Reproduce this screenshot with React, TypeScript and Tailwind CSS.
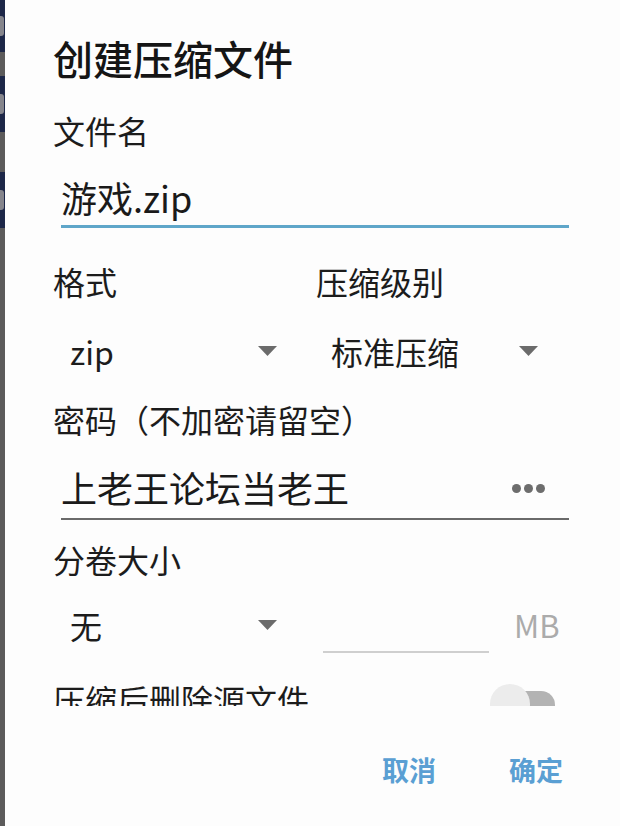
import React from 'react';

const FONT = { fontFamily: '"Noto Sans CJK SC", "Noto Sans", sans-serif' };

// little caret used by the dropdown fields
function Caret() {
  return (
    <svg width="19" height="10" viewBox="0 0 19 10" className="shrink-0">
      <polygon points="0,0 19,0 9.5,10" fill="#6b6b6b" />
    </svg>
  );
}

function Spinner({ value }: { value: string }) {
  return (
    <div className="flex items-center h-[52px] pl-[17px] pr-[37px] justify-between">
      <span className="text-[32px] leading-[52px] text-[#1c1c1c]">{value}</span>
      <Caret />
    </div>
  );
}

// strip of the window behind the dialog
function BehindStrip() {
  const blocks = [
    { h: 52, navy: true },
    { h: 24, navy: false },
    { h: 56, navy: true },
    { h: 40, navy: false },
    { h: 56, navy: true },
  ];
  return (
    <div className="w-[5px] shrink-0 bg-[#5c5b5b] flex flex-col">
      {blocks.map((b, i) =>
        b.navy ? (
          <div key={i} className="bg-[#1d2748] flex flex-col justify-center" style={{ height: b.h }}>
            <div className="w-[4px] h-[20px] rounded-r-[3px] bg-[#85858c]" />
          </div>
        ) : (
          <div key={i} className="bg-[#5c5b5b]" style={{ height: b.h }} />
        ),
      )}
    </div>
  );
}

export default function App() {
  return (
    <div className="w-[620px] h-[826px] flex overflow-hidden bg-white" style={FONT}>
      <BehindStrip />

      <div className="flex-1 min-w-0 flex flex-col bg-[#fdfdfd]">
        {/* scrolling body */}
        <div className="h-[706px] shrink-0 overflow-hidden pl-[48px] pr-[51px] pt-[36px]">
          <div className="h-[45px] text-[40px] leading-[45px] font-medium text-[#151515]">创建压缩文件</div>

          <div className="mt-[29px] h-[40px] text-[32px] leading-[40px] text-[#1c1c1c]">文件名</div>

          <div className="mt-[22px] ml-[8px] h-[56px] border-b-[3px] border-[#5fa6c9]">
            <div className="text-[36px] leading-[50px] text-[#1a1a1a]">游戏.zip</div>
          </div>

          <div className="mt-[33px] grid grid-cols-[261px_261px]">
            <div className="h-[40px] text-[32px] leading-[40px] text-[#1c1c1c]">格式</div>
            <div className="h-[40px] text-[32px] leading-[40px] text-[#1c1c1c] pl-[2px]">压缩级别</div>
            <div className="mt-[24px]">
              <Spinner value="zip" />
            </div>
            <div className="mt-[24px]">
              <Spinner value="标准压缩" />
            </div>
          </div>

          <div className="mt-[22px] h-[40px] text-[32px] leading-[40px] text-[#1c1c1c]">密码（不加密请留空）</div>

          <div className="mt-[23px] ml-[8px] h-[58px] border-b-2 border-[#6a6a6a] flex items-start justify-between pr-[24px]">
            <div className="text-[36px] leading-[50px] text-[#1a1a1a]">上老王论坛当老王</div>
            <div className="flex gap-[3px] mt-[22px]">
              <span className="w-[9px] h-[9px] rounded-full bg-[#6d6d6d]" />
              <span className="w-[9px] h-[9px] rounded-full bg-[#6d6d6d]" />
              <span className="w-[9px] h-[9px] rounded-full bg-[#6d6d6d]" />
            </div>
          </div>

          <div className="mt-[19px] h-[40px] text-[32px] leading-[40px] text-[#1c1c1c]">分卷大小</div>

          <div className="mt-[20px] grid grid-cols-[261px_261px]">
            <Spinner value="无" />
            <div className="flex items-start h-[52px]">
              <div className="ml-[9px] w-[166px] h-[54px] border-b-2 border-[#cfcfcf]" />
              <span className="ml-[25px] text-[31px] leading-[52px] text-[#ababab]">MB</span>
            </div>
          </div>

          <div className="mt-[28px] h-[40px] flex items-start justify-between pr-[14px]">
            <span className="text-[32px] leading-[40px] text-[#1c1c1c]">压缩后删除源文件</span>
            <div className="relative w-[65px] h-[40px] mt-[5px]">
              <div className="absolute right-0 top-[7px] w-[46px] h-[28px] rounded-full bg-[#b3b3b3]" />
              <div className="absolute left-0 top-0 w-[40px] h-[40px] rounded-full bg-[#ececec]" />
            </div>
          </div>
        </div>

        {/* action buttons */}
        <div className="flex justify-end items-center gap-[73px] pr-[57px] mt-[40px] h-[48px]">
          <button className="text-[27px] leading-[48px] font-bold text-[#5a9fd3]">取消</button>
          <button className="text-[27px] leading-[48px] font-bold text-[#5a9fd3]">确定</button>
        </div>
      </div>
    </div>
  );
}
